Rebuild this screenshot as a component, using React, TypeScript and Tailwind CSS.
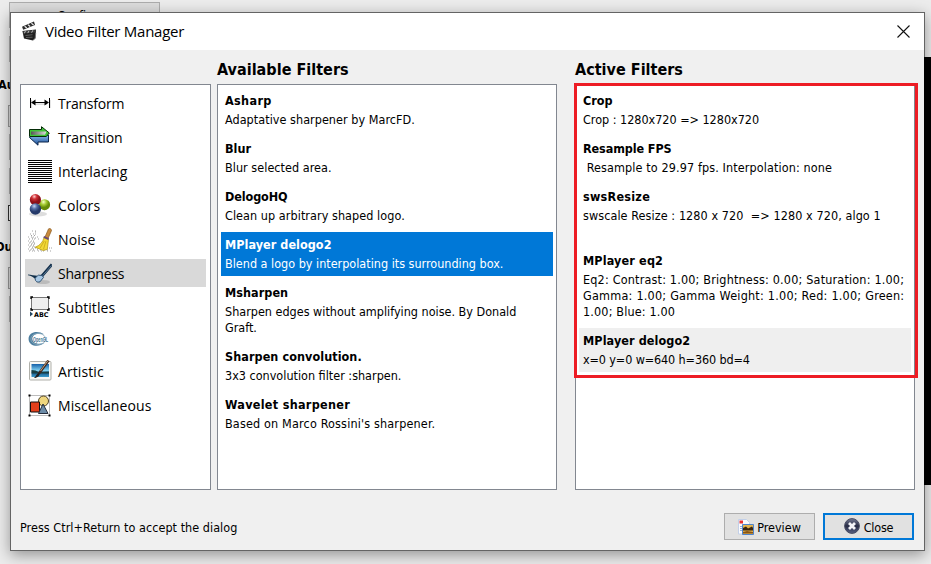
import React from "react";

const sans = "font-['Open_Sans','Noto_Sans',sans-serif]";

function ClapperIcon() {
  return (
    <svg width="18" height="20" viewBox="0 0 18 20" className="-mt-[2px]">
      <path d="M1 5.8 13 .6l1 3.4L2.2 8.8Z" fill="#2a2a2a" />
      <path d="m3.6 5.2 2.2 1.8M7 3.7l2.2 1.8M10.4 2.2 12.6 4" stroke="#e8e8e8" strokeWidth="1.2" />
      <path d="M1.4 10 15 8.6l-.6 8.9L12 19.6 3 17.6Z" fill="#1f1f1f" />
      <path d="m2 10.2 12.8-1.3v2.3L2.3 12.6Z" fill="#3c3c3c" />
      <path d="m4.4 10-1 2.3M8 9.8l-1.2 2.3M11.8 9.3l-1.2 2.4" stroke="#bbb" />
      <path d="m4.5 14.5 7-.8M5 16.5l6.5-.3" stroke="#777" strokeWidth=".7" />
      <path d="m12.2 19 2-2 .5-5" fill="none" stroke="#777" strokeWidth=".8" />
    </svg>
  );
}

function TransformIcon() {
  return (
    <svg width="24" height="24" viewBox="0 0 24 24">
      <path d="M3.5 8v8M22 8v8M6 12.2h13" stroke="#888" strokeWidth="1.2" opacity=".35" />
      <path d="M2.5 6v10M21.5 6v10M5 10.5h14" stroke="#000" />
      <path d="m3 10.5 4.5-3v6ZM21 10.5l-4.5-3v6Z" fill="#000" />
    </svg>
  );
}

function TransitionIcon() {
  return (
    <svg width="24" height="24" viewBox="0 0 24 24">
      <defs>
        <linearGradient id="tg">
          <stop stopColor="#555" />
          <stop offset="1" stopColor="#dedede" />
        </linearGradient>
        <linearGradient id="tb" x2="0" y2="1">
          <stop stopColor="#8bbcf0" />
          <stop offset="1" stopColor="#174a91" />
        </linearGradient>
      </defs>
      <path d="M1.500 11.500 5 9h15.500v7H10v3.200Z" fill="url(#tb)" stroke="#0b254a" />
      <path d="M1.500 3.500h12V.7l7.800 6.300-3 3.500H1.500Z" fill="#3fc438" stroke="#052c07" />
      <path d="M3 5.500h15.500l-1.500 3.200H3Z" fill="url(#tg)" />
    </svg>
  );
}

function InterlacingIcon() {
  return (
    <svg width="24" height="24" viewBox="0 0 24 24" shapeRendering="crispEdges">
      <path
        d="M0 .5h24M0 2.5h24M0 4.5h24M0 6.5h24M0 8.5h24M0 10.5h24M0 12.5h24M0 14.5h24M0 16.5h24M0 18.5h24M0 20.5h24M0 22.5h24"
        stroke="#000"
      />
    </svg>
  );
}

function ColorsIcon() {
  return (
    <svg width="24" height="24" viewBox="0 0 24 24">
      <defs>
        <radialGradient id="cr" cx=".4" cy=".22">
          <stop stopColor="#ffd0d0" />
          <stop offset=".45" stopColor="#cf3035" />
          <stop offset="1" stopColor="#8c1018" />
        </radialGradient>
        <radialGradient id="cg" cx=".4" cy=".25">
          <stop stopColor="#f6ffca" />
          <stop offset=".5" stopColor="#a9ce36" />
          <stop offset="1" stopColor="#668c08" />
        </radialGradient>
        <radialGradient id="cb" cx=".4" cy=".25">
          <stop stopColor="#c5d4f2" />
          <stop offset=".5" stopColor="#526ca3" />
          <stop offset="1" stopColor="#253a6a" />
        </radialGradient>
      </defs>
      <ellipse cx="10" cy="20" rx="9" ry="2.5" fill="#777" opacity=".25" />
      <circle cx="16.6" cy="10.7" r="5.5" fill="url(#cg)" />
      <circle cx="7.4" cy="5.7" r="5.6" fill="url(#cr)" />
      <circle cx="7.4" cy="15" r="5.7" fill="url(#cb)" />
    </svg>
  );
}

function NoiseIcon() {
  return (
    <svg width="24" height="24" viewBox="0 0 24 24">
      <path
        d="M4 3h5M2 6h9M0 9h10M1 11h11M0 13h9M1 15h8M0 17h8M1 19h7M0 21h14M1 23h22M18 20h6"
        stroke="#999"
        strokeWidth=".9"
        strokeDasharray="1 2 1 1 1 3"
      />
      <path
        d="M5 4h4M1 7.500h8M2 10h8M0 14h8M1 16h6M0 18h6M2 20h6M0 22h20"
        stroke="#888"
        strokeWidth=".8"
        strokeDasharray="1 3 1 2"
        strokeDashoffset="2"
      />
      <path d="M17 9 20.5.9c1.1-1 3.1 0 3 1.6L20 10.5Z" fill="#c98b3e" stroke="#8a5a20" strokeWidth=".7" />
      <path d="m16 9.5 4.5 2-1.2 10-4.3.9-7.8-3.2C12 17.5 15 14 16 9.5Z" fill="#f1d936" stroke="#b0920c" strokeWidth=".7" />
      <path d="m16.3 13-4.2 7m5.800-6.800-2.400 8" stroke="#c8a518" strokeWidth=".8" />
      <path d="m15.7 8.9 5 2.200" stroke="#6c4a72" strokeWidth="1.800" />
    </svg>
  );
}

function SharpnessIcon() {
  return (
    <svg width="24" height="24" viewBox="0 0 24 24">
      <ellipse cx="15" cy="20" rx="7" ry="2" fill="#777" opacity=".3" />
      <path d="M13.5 14.5 23 3.5" stroke="#142f4a" strokeWidth="2.8" strokeLinecap="square" />
      <path d="m14 14.5 9.5-11" stroke="#6b8ca8" strokeWidth=".8" />
      <path d="M0 12.4c3 .3 6.500 1 9.200 1.300L7.600 17C5 15 3 13.600 0 13.200Z" fill="#102f4a" />
      <path d="m7 16.200 3.300-3 3.800.2 1.400 2-3.500 4.400c-1.500.6-3.400.3-4.400-1.200Z" fill="#a8c8e4" stroke="#24476a" strokeWidth=".9" />
    </svg>
  );
}

function SubtitlesIcon() {
  return (
    <svg width="24" height="24" viewBox="0 0 24 24">
      <path d="M3.5 1.5h17v12h-17Z" fill="#efefef" stroke="#777" />
      <path d="M3 3V1h2M19 1h2v2M3 12v2h2m14 0h2v-2" fill="none" stroke="#000" strokeWidth="1.3" />
      <path d="m2 15.500 3 2.500-3 2.500Z" fill="#244764" />
      <text x="6" y="21" textLength="14.5" lengthAdjust="spacingAndGlyphs" fontSize="6.5" fontWeight="bold" fontFamily="DejaVu Sans">ABC</text>
    </svg>
  );
}

function OpenGlIcon() {
  return (
    <svg width="21" height="20" viewBox="0 0 21 20">
      <path d="M16.5 4.6C9-.5 0 2.6.6 9.4s10 8.4 16 3.3C10 15.3 4.3 13 4.3 8.8s5.6-6.3 12.2-4.2Z" fill="#4e7fa0" />
      <ellipse cx="10.2" cy="9" rx="7.4" ry="5.6" fill="none" stroke="#88aabd" strokeWidth=".8" />
      <text x="5" y="12" textLength="15" lengthAdjust="spacingAndGlyphs" fontSize="7.5" fontWeight="bold" fontFamily="Liberation Sans" fill="#417493">OpenGL</text>
    </svg>
  );
}

function ArtisticIcon() {
  return (
    <svg width="24" height="24" viewBox="0 0 24 24">
      <defs>
        <linearGradient id="ab" x2="0" y2="1">
          <stop stopColor="#1560a8" />
          <stop offset=".5" stopColor="#7fd0f0" />
          <stop offset=".7" stopColor="#1c6090" />
          <stop offset="1" stopColor="#3c9ccb" />
        </linearGradient>
      </defs>
      <rect x="1.5" y="1.5" width="21.5" height="18.5" rx="1" fill="#f8f8f4" stroke="#b0b0aa" />
      <path d="M3.5 4h17.5v13H3.5Z" fill="url(#ab)" />
      <path d="m3.5 10 4 .5 3 1.5 10.500-.5v2H3.500Z" fill="#193f42" />
      <path d="m11 13.500 9.500-13" stroke="#42291f" strokeWidth="2.600" />
      <path d="m12.500 11 7.500-10.500" stroke="#d0b08a" strokeWidth=".9" />
      <path d="M11.500 12.500c1 3-2 5.500-5.500 5.500 2-1.500 2.500-4.500 5.500-5.500Z" fill="#202020" />
    </svg>
  );
}

function MiscellaneousIcon() {
  return (
    <svg width="24" height="24" viewBox="0 0 24 24">
      <rect x="1.5" y="1.5" width="20" height="20" fill="none" stroke="#777" strokeDasharray="1 1" />
      <circle cx="15.5" cy="7" r="5" fill="#efd67e" stroke="#4f4225" />
      <path d="M2.500 8h9v10h-9Z" fill="#e3401b" stroke="#111" />
      <path d="m15 10 5 9.500h-9.500Z" fill="#6b8ba7" stroke="#252d3b" />
      <path d="M.5.5h2v2h-2ZM20.500.5h2v2h-2ZM.5 20.500h2v2h-2ZM20.500 20.500h2v2h-2Z" fill="#000" />
    </svg>
  );
}

function PreviewIcon() {
  return (
    <svg width="16" height="16" viewBox="0 0 16 16" className="shrink-0">
      <path d="M.5.5h8l3 3V15H.5Z" fill="#fafbfe" stroke="#c3d0e8" />
      <path d="M1.500 1.500h3.500v3H1.500Z" fill="#ea3030" />
      <path d="M2 7.500h2M2 9.500h2M2 11.500h2" stroke="#91add5" />
      <path d="M4.500 5.500h11v10h-11Z" fill="#e4b44e" stroke="#4d83cc" />
      <path d="M5 9 8 7.500l2 2 4-2 1 1.500v2.500H5Z" fill="#39240e" />
      <path d="m5 13 4-1 6 1v1.500H5Z" fill="#8a5515" />
    </svg>
  );
}

function CloseBadgeIcon() {
  return (
    <svg width="16" height="16" viewBox="0 0 16 16" className="-mt-px shrink-0">
      <defs>
        <linearGradient id="xb" x2="0" y2="1">
          <stop stopColor="#777c94" />
          <stop offset=".5" stopColor="#282c45" />
          <stop offset="1" stopColor="#5a6284" />
        </linearGradient>
      </defs>
      <circle cx="8" cy="8" r="7.400" fill="url(#xb)" stroke="#4a4d63" />
      <path d="m5 5 6 6m0-6-6 6" stroke="#f4f4f8" strokeWidth="2.800" />
    </svg>
  );
}

type Category = { label: string; icon: React.ReactNode; tracking: string; selected?: boolean; size?: string };

const categories: Category[] = [
  { label: "Transform", icon: <TransformIcon />, tracking: "tracking-[-0.24px]" },
  { label: "Transition", icon: <TransitionIcon />, tracking: "tracking-[-0.1px]" },
  { label: "Interlacing", icon: <InterlacingIcon />, tracking: "tracking-[0.05px]" },
  { label: "Colors", icon: <ColorsIcon />, tracking: "tracking-[0.1px]" },
  { label: "Noise", icon: <NoiseIcon />, tracking: "tracking-[0.1px]" },
  { label: "Sharpness", icon: <SharpnessIcon />, tracking: "tracking-[-0.2px]", selected: true },
  { label: "Subtitles", icon: <SubtitlesIcon />, tracking: "tracking-[0.1px]" },
  { label: "OpenGl", icon: <OpenGlIcon />, tracking: "tracking-[0.1px]", size: "h-6" },
  { label: "Artistic", icon: <ArtisticIcon />, tracking: "tracking-[0.1px]" },
  { label: "Miscellaneous", icon: <MiscellaneousIcon />, tracking: "tracking-[0.08px]" },
];

type Line = { text: string; tracking?: string };
type Filter = { name: string; nameTracking?: string; lines: Line[]; tone?: string };

const available: Filter[] = [
  { name: "Asharp", nameTracking: "tracking-[0.35px]", lines: [{ text: "Adaptative sharpener by MarcFD.", tracking: "tracking-[0.04px]" }] },
  { name: "Blur", lines: [{ text: "Blur selected area.", tracking: "tracking-[0.04px]" }] },
  { name: "DelogoHQ", nameTracking: "tracking-[-0.1px]", lines: [{ text: "Clean up arbitrary shaped logo.", tracking: "tracking-[0.06px]" }] },
  {
    name: "MPlayer delogo2",
    nameTracking: "tracking-[0.05px]",
    lines: [{ text: "Blend a logo by interpolating its surrounding box." }],
    tone: "bg-[#0078d7] text-white",
  },
  { name: "Msharpen", nameTracking: "tracking-[0.05px]", lines: [{ text: "Sharpen edges without amplifying noise. By Donald" }, { text: "Graft." }] },
  { name: "Sharpen convolution.", nameTracking: "tracking-[0.07px]", lines: [{ text: "3x3 convolution filter :sharpen." }] },
  { name: "Wavelet sharpener", nameTracking: "tracking-[0.3px]", lines: [{ text: "Based on Marco Rossini's sharpener.", tracking: "tracking-[0.16px]" }] },
];

const active: Filter[] = [
  { name: "Crop", lines: [{ text: "Crop : 1280x720 => 1280x720", tracking: "tracking-[-0.02px]" }] },
  { name: "Resample FPS", nameTracking: "tracking-[-0.1px]", lines: [{ text: " Resample to 29.97 fps. Interpolation: none", tracking: "tracking-[0.11px]" }] },
  { name: "swsResize", nameTracking: "tracking-[0.25px]", lines: [{ text: "swscale Resize : 1280 x 720  => 1280 x 720, algo 1", tracking: "tracking-[0.08px]" }, { text: "" }] },
  {
    name: "MPlayer eq2",
    nameTracking: "tracking-[0.15px]",
    lines: [
      { text: "Eq2: Contrast: 1.00; Brightness: 0.00; Saturation: 1.00;", tracking: "tracking-[0.18px]" },
      { text: "Gamma: 1.00; Gamma Weight: 1.00; Red: 1.00; Green:", tracking: "tracking-[0.23px]" },
      { text: "1.00; Blue: 1.00", tracking: "tracking-[0.15px]" },
    ],
  },
  { name: "MPlayer delogo2", nameTracking: "tracking-[0.1px]", lines: [{ text: "x=0 y=0 w=640 h=360 bd=4", tracking: "tracking-[-0.12px]" }], tone: "bg-[#efefef]" },
];

function FilterList({ title, filters, framed }: { title: string; filters: Filter[]; framed?: boolean }) {
  return (
    <section className="flex w-[340px] flex-col">
      <h2 className="h-[34px] pt-2 text-[16px] leading-6 font-bold tracking-[0.02px]">{title}</h2>
      <div className="relative flex h-[406px] flex-col gap-1 border border-[#828790] bg-white p-[3px]">
        {filters.map((f) => (
          <div key={f.name} className={`px-1 pt-1 pb-1 ${f.tone ?? ""}`}>
            <div className={`mb-[3px] h-[17px] text-[12.5px] leading-[17px] font-bold ${f.nameTracking ?? ""}`}>{f.name}</div>
            {f.lines.map((line, i) => (
              <div key={i} className={`h-4 text-[12.5px] leading-4 whitespace-pre ${line.tracking ?? ""}`}>{line.text}</div>
            ))}
          </div>
        ))}
        {framed && <div className="absolute -top-[2px] -left-[2px] h-[295px] w-[344px] border-[3px] border-[#ed1c24]" />}
      </div>
    </section>
  );
}

function Backdrop() {
  return (
    <div className="relative h-[564px] w-[931px] bg-[#ececec] text-[12.5px] font-bold">
      <div className="absolute top-[2px] left-[9px] h-[26px] w-[151px] border border-[#adadad] bg-[#dcdcdc] text-center font-normal leading-[26px]">Configure</div>
      <div className="absolute top-[36px] left-[9px] h-[26px] w-[151px] border border-[#adadad] bg-[#dcdcdc]" />
      <div className="absolute top-[76px] left-[-2px]">Au</div>
      <div className="absolute top-[105px] left-[8px] h-[22px] w-20 border border-[#999] bg-[#ddd]" />
      <div className="absolute top-[134px] left-[9px] h-[26px] w-20 border border-[#adadad] bg-[#dcdcdc]" />
      <div className="absolute top-[168px] left-[9px] h-[26px] w-20 border border-[#adadad] bg-[#dcdcdc]" />
      <div className="absolute top-[205px] left-[8px] h-4 w-4 border border-[#333] bg-white" />
      <div className="absolute top-[238px] left-[-5px]">Ou</div>
      <div className="absolute top-[267px] left-[8px] h-[22px] w-20 border border-[#999] bg-[#ddd]" />
      <div className="absolute top-[296px] left-[9px] h-[26px] w-20 border border-[#adadad] bg-[#dcdcdc]" />
    </div>
  );
}

export default function App() {
  return (
    <main className="relative h-[564px] w-[931px] overflow-hidden font-['DejaVu_Sans_Condensed','DejaVu_Sans',sans-serif] text-black">
      <Backdrop />
      <div className="absolute top-[12px] left-[10px] flex h-[539px] w-[915px] flex-col border border-[#646464] bg-[#f0f0f0] shadow-[0_4px_14px_rgba(0,0,0,0.38)]">
        <header className={`flex h-[37px] shrink-0 items-center bg-white pl-[10px] ${sans}`}>
          <ClapperIcon />
          <h1 className="-mt-[2px] ml-[6px] text-[15px] leading-5 tracking-[-0.27px]">Video Filter Manager</h1>
          <svg className="mr-[14px] ml-auto" width="13" height="13" viewBox="0 0 13 13">
            <path d="m.5.5 12 12m0-12-12 12" stroke="#111" strokeWidth="1.100" />
          </svg>
        </header>
        <div className="flex pl-[9px]">
          <nav className={`mt-[34px] mr-[6px] flex h-[406px] w-[191px] flex-col gap-[6px] border border-[#828790] bg-white px-1 pt-1 ${sans}`}>
            {categories.map((c) => (
              <div key={c.label} className={`flex shrink-0 items-center gap-[6px] pt-[2px] pl-[3px] ${c.size ?? "h-7"} ${c.selected ? "bg-[#d9d9d9]" : ""}`}>
                {c.icon}
                <span className={`text-[14px] leading-5 ${c.tracking}`}>{c.label}</span>
              </div>
            ))}
          </nav>
          <FilterList title="Available Filters" filters={available} />
          <div className="w-[18px]" />
          <FilterList title="Active Filters" filters={active} framed />
        </div>
        <footer className="mt-[23px] flex h-[27px] items-center pr-[10px] pl-[9px] text-[12.5px]">
          <span className="pt-[3px] tracking-[0.04px]">Press Ctrl+Return to accept the dialog</span>
          <button className="mr-2 ml-auto flex h-[27px] w-[91px] items-center justify-center gap-[3px] border border-[#adadad] bg-[#e1e1e1]">
            <PreviewIcon />
            <span className="pt-[3px]">Preview</span>
          </button>
          <button className="flex h-[27px] w-[91px] items-center justify-center gap-1 border-2 border-[#0078d7] bg-[#e1e1e1]">
            <CloseBadgeIcon />
            <span className="pt-[3px] tracking-[-0.2px]">Close</span>
          </button>
        </footer>
      </div>
      <div className="absolute top-[57px] right-0 h-[428px] w-[7px] bg-black" />
    </main>
  );
}
